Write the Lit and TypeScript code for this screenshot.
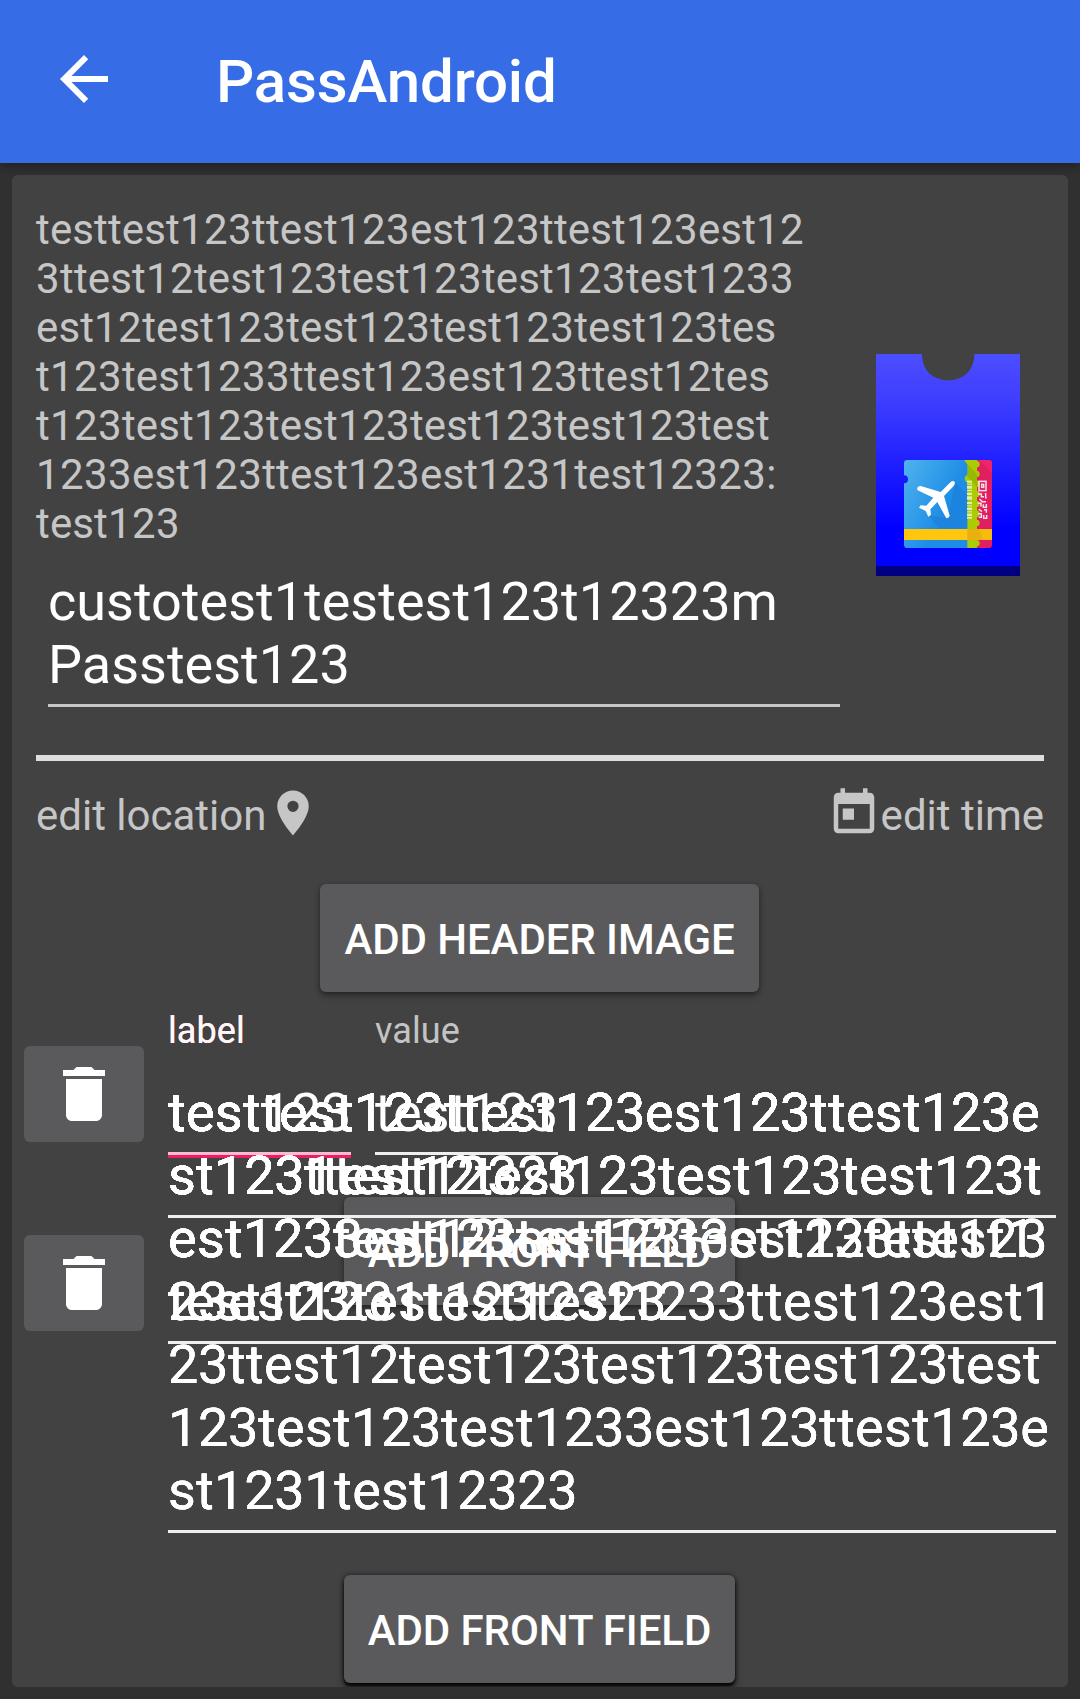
import { LitElement, html, css, svg } from "lit";
import { customElement, property } from "lit/decorators.js";

const DESCRIPTION = [
  "testtest123ttest123est123ttest123est12",
  "3ttest12test123test123test123test1233",
  "est12test123test123test123test123tes",
  "t123test1233ttest123est123ttest12tes",
  "t123test123test123test123test123test",
  "1233est123ttest123est1231test12323:",
  "test123",
];

const FIELDS = [
  ["testtest123ttest123est123ttest123e", "st1231test12323"],
  [
    "testtest123ttest123est123ttest123e",
    "st123ttest12test123test123test123t",
    "est123test123test1233est123ttest1",
    "23est1231test12323",
  ],
  [
    "testtest123ttest123est123ttest123e",
    "st123ttest12test123test123test123t",
    "est1233est12test123test123test123",
    "test123test123test1233ttest123est1",
    "23ttest12test123test123test123test",
    "123test123test1233est123ttest123e",
    "st1231test12323",
  ],
];

const ICONS: Record<string, string> = {
  back: "M20 11H7.83l5.59-5.59L12 4l-8 8 8 8 1.41-1.41L7.83 13H20v-2z",
  place:
    "M12 2C8.13 2 5 5.13 5 9c0 5.25 7 13 7 13s7-7.75 7-13c0-3.87-3.13-7-7-7zm0 9.5a2.5 2.5 0 0 1 0-5 2.5 2.5 0 0 1 0 5z",
  today:
    "M19 3h-1V1h-2v2H8V1H6v2H5c-1.11 0-1.99.9-1.99 2L3 19c0 1.1.89 2 2 2h14c1.1 0 2-.9 2-2V5c0-1.1-.9-2-2-2zm0 16H5V8h14v11zM7 10h5v5H7z",
  trash: "M6 19c0 1.1.9 2 2 2h8c1.1 0 2-.9 2-2V7H6v12zM19 4h-3.5l-1-1h-5l-1 1H5v2h14V4z",
};

@customElement("md-icon")
class MdIcon extends LitElement {
  @property() name = "back";
  @property({ type: Number }) size = 72;
  static styles = css`
    :host { display: block; flex: none; }
    svg { display: block; fill: currentColor; }
  `;
  render() {
    return html`<svg width=${this.size} height=${this.size} viewBox="0 0 24 24"><path d=${ICONS[this.name]} /></svg>`;
  }
}

@customElement("pass-image")
class PassImage extends LitElement {
  static styles = css`
    :host { display: block; flex: none; }
    svg { display: block; }
  `;
  render() {
    const teeth = [403, 432, 461, 492, 522, 551, 579, 606, 640].map(
      (y) => svg`<circle cx="379" cy=${y} r="10" fill="#a9cc05" />`
    );
    const bars = [
      [452, 6], [461, 3], [468, 8], [480, 3], [488, 7], [499, 10], [516, 6],
      [526, 3], [533, 7], [544, 3], [551, 7], [561, 5],
    ].map(([y, h]) => svg`<rect x="351" y=${y} width="15" height=${h} fill="#e3edb0" />`);
    return html`<svg width="144" height="222" viewBox="78 72 432 666">
      <defs>
        <linearGradient id="pass" x1="0" y1="0" x2="0" y2="1">
          <stop offset="0" stop-color="#4d4dff" />
          <stop offset=".22" stop-color="#3d3dff" />
          <stop offset=".78" stop-color="#0000ff" />
        </linearGradient>
        <linearGradient id="sky" x1="0" y1="0" x2="1" y2=".7">
          <stop offset="0" stop-color="#4fb3ee" />
          <stop offset=".7" stop-color="#1f8de6" />
        </linearGradient>
        <clipPath id="card"><rect x="162" y="390" width="264" height="264" rx="10" /></clipPath>
      </defs>
      <path d="M78 72H216C216 122 250 151 295 151S373 122 373 72H510V738H78Z" fill="url(#pass)" />
      <rect x="78" y="708" width="432" height="30" fill="#000080" />
      <g clip-path="url(#card)">
        <rect x="345" y="390" width="81" height="264" fill="#e01e60" />
        <path d="M388 390H426V430Z" fill="#f0246a" />
        <rect x="330" y="390" width="51" height="264" fill="#a9cc05" />
        ${teeth}
        <path d="M352 402L381 432V470L352 440Z" fill="#8fb200" opacity=".7" />
        <path d="M162 390H342L352 403V434A13 13 0 0 0 352 458V654H162V460A12 12 0 0 0 162 436Z" fill="url(#sky)" />
        <path d="M315 457L352 494V596H268L236 556L294 563Z" fill="#1976d2" opacity=".4" />
        ${bars}
        <g fill="none" stroke="#fbdfe8" stroke-width="4.5">
          <rect x="387" y="454" width="21" height="28" />
          <rect x="395" y="463" width="6" height="9" />
          <path d="M384 492H394V500H402M407 489V503H410M388 507L397 515H408M383 520H393V530M400 523V532H409V522M386 537L396 545M402 539H409V548M384 551H394V562H386M401 555V565H410V555" />
        </g>
        <rect x="162" y="597" width="264" height="33" fill="#ffc60e" />
        <rect x="352" y="597" width="74" height="33" fill="#e9b010" />
        <path d="M388 597H426V630H398Z" fill="#f4bc0e" />
      </g>
      <path
        d="M201 476Q203 467 212 468L272 486L302 456Q309 450 314 456Q316 461 311 468L282 498L299 557Q298 564 289 565L262 516L241 538L243 554L235 560L227 543L207 533L212 526L229 527L250 503L203 481Z"
        fill="#fff"
      />
    </svg>`;
  }
}

@customElement("raised-button")
class RaisedButton extends LitElement {
  static styles = css`
    :host { display: block; }
    button {
      display: block; width: 100%; height: 108px; margin: 0; padding: 31px 0 28px; border: 0;
      border-radius: 6px; background: #5a5a5c; color: #fff; text-align: center; white-space: nowrap;
      font: 500 42px/49px Roboto, sans-serif; letter-spacing: -.08px;
      box-shadow: 0 4px 6px rgba(0, 0, 0, .3), 0 1px 4px rgba(0, 0, 0, .25);
    }
    :host([deep]) button {
      box-shadow: 0 4px 6px rgba(0, 0, 0, .7), 0 3px 2px rgba(0, 0, 0, .6), 0 0 4px rgba(0, 0, 0, .5);
    }
  `;
  render() {
    return html`<button><slot></slot></button>`;
  }
}

@customElement("app-root")
class AppRoot extends LitElement {
  static styles = css`
    :host { display: block; font-family: Roboto, sans-serif; }
    .screen { height: 1699px; overflow: hidden; background: #303030; display: flex; flex-direction: column; }
    .bar {
      height: 163px; flex: none; box-sizing: border-box; padding: 43px 48px 0; display: flex; gap: 96px;
      background: #366de7; color: #fff; box-shadow: 0 3px 10px rgba(0, 0, 0, .35);
    }
    .title {
      margin: 0; padding-top: 4px; font-size: 60px; line-height: 70px; font-weight: 500;
      letter-spacing: -.13px;
    }
    .card {
      margin: 12px 12px 0; height: 1512px; border-radius: 6px; background: #424242; overflow: hidden;
      display: flex; flex-direction: column;
    }
    .top { display: flex; gap: 36px; padding: 30px 48px 0 24px; }
    .info { width: 804px; flex: none; color: #c6c6c6; }
    .line { white-space: nowrap; }
    .desc { font-size: 42px; line-height: 49px; letter-spacing: .14px; }
    .desc .num { letter-spacing: .4px; }
    .name {
      margin: 22px 0 0 12px; padding-bottom: 8px; border-bottom: 3px solid #c6c6c6; color: #fff;
      font-size: 54px; line-height: 63px;
    }
    .pass { margin-top: 149px; }
    .rule { margin: 48px 24px 0; height: 6px; flex: none; background: #dedede; }
    .edit {
      display: flex; justify-content: space-between; margin: 25px 24px 0; color: #c6c6c6;
      font-size: 42px; line-height: 49px;
    }
    .action { display: flex; align-items: flex-end; height: 54px; }
    .header-image { width: 439px; margin: 44px 0 0 308px; }
    .stack { display: grid; align-items: start; justify-items: start; }
    .stack > * { grid-area: 1 / 1; }
    .front { width: 391px; margin: 205px 0 0 332px; }
    .front-last { width: 391px; margin: 583px 0 0 332px; }
    .deletes { display: grid; gap: 93px; margin: 54px 0 0 12px; }
    .delete {
      width: 120px; height: 96px; border: 0; border-radius: 6px; padding: 0; background: #5a5a5c; color: #fff;
      display: grid; place-items: center;
    }
    .fields { display: flex; gap: 24px; margin: 18px 0 0 156px; }
    .field { box-sizing: border-box; color: #fff; font-size: 54px; line-height: 63px; }
    .hint { height: 71px; color: rgba(255, 255, 255, .7); font-size: 36px; line-height: 42px; letter-spacing: .1px; }
    .focus .hint { color: #e91e63; }
    .input { padding-bottom: 8px; border-bottom: 3px solid #efefef; letter-spacing: .28px; }
    .input .num { letter-spacing: -.33px; }
    .short { width: 183px; }
    .focus .input { border-bottom: 6px solid #e91e63; }
    .long { width: 888px; margin: 18px 0 0 156px; }
    .long .input { text-shadow: 0 0 0 #fff, 0 0 0 #fff; }
    .tint { width: 183px; height: 3px; margin: 160px 0 0 156px; background: rgba(255, 255, 255, .7); }
  `;

  private lines(list: string[]) {
    return list.map(
      (t) =>
        html`<div class="line">${t
          .split(/(\d+)/)
          .filter(Boolean)
          .map((s) => (/\d/.test(s) ? html`<span class="num">${s}</span>` : s))}</div>`
    );
  }

  render() {
    return html`<div class="screen">
      <header class="bar">
        <md-icon name="back" size="72"></md-icon>
        <h1 class="title">PassAndroid</h1>
      </header>
      <main class="card">
        <section class="top">
          <div class="info">
            <div class="desc">${this.lines(DESCRIPTION)}</div>
            <div class="name">${this.lines(["custotest1testest123t12323m", "Passtest123"])}</div>
          </div>
          <pass-image class="pass"></pass-image>
        </section>
        <div class="rule"></div>
        <section class="edit">
          <div class="action"><span>edit location</span><md-icon name="place" size="54"></md-icon></div>
          <div class="action"><md-icon name="today" size="54"></md-icon><span>edit time</span></div>
        </section>
        <raised-button class="header-image">ADD HEADER IMAGE</raised-button>
        <section class="stack">
          <raised-button class="front">ADD FRONT FIELD</raised-button>
          <div class="deletes">
            <button class="delete"><md-icon name="trash" size="72"></md-icon></button>
            <button class="delete"><md-icon name="trash" size="72"></md-icon></button>
          </div>
          <div class="fields">
            <div class="field short focus"><div class="hint">label</div><div class="input">${this.lines(["test123"])}</div></div>
            <div class="field short"><div class="hint">value</div><div class="input">${this.lines(["test123"])}</div></div>
          </div>
          <div class="tint"></div>
          ${FIELDS.map(
            (f) => html`<div class="field long"><div class="hint">label</div><div class="input">${this.lines(f)}</div></div>`
          )}
          <raised-button class="front-last" deep>ADD FRONT FIELD</raised-button>
        </section>
      </main>
    </div>`;
  }
}
